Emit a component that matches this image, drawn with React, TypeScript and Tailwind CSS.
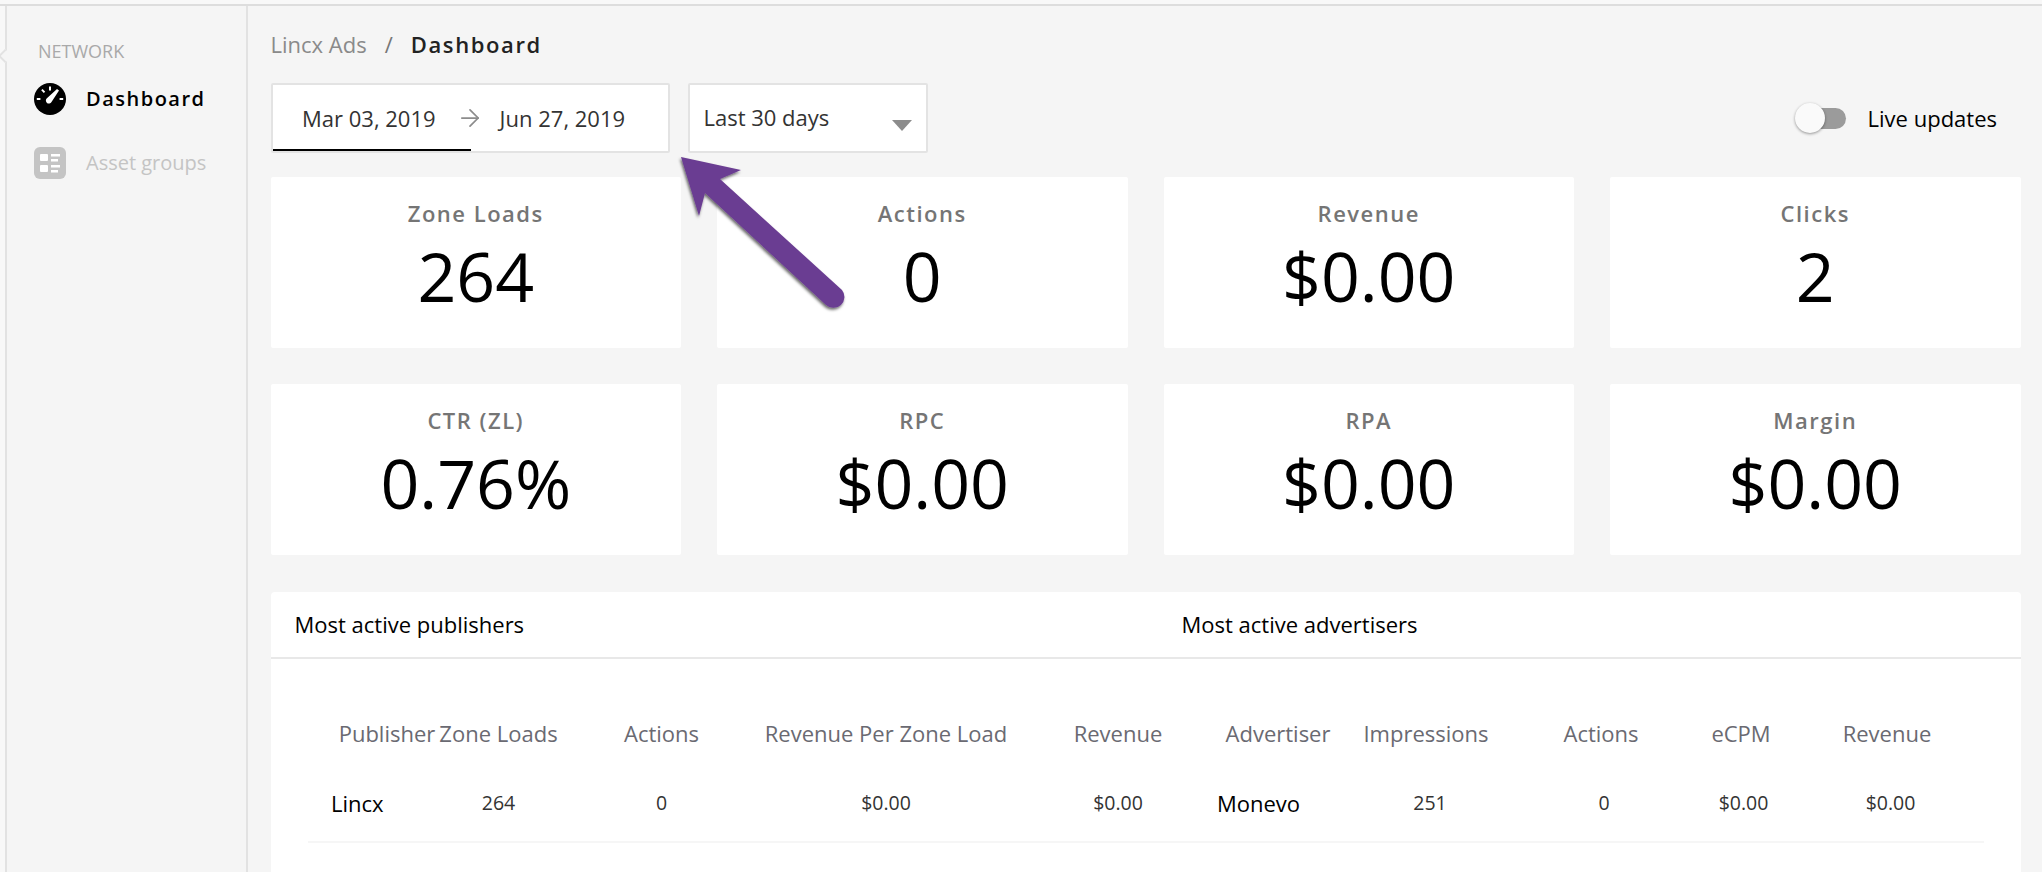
import { ArrowRight } from "lucide-react";

const font = { fontFamily: '"Open Sans", sans-serif' };

const stats = [
  { label: "Zone Loads", value: "264" },
  { label: "Actions", value: "0" },
  { label: "Revenue", value: "$0.00" },
  { label: "Clicks", value: "2" },
  { label: "CTR (ZL)", value: "0.76%" },
  { label: "RPC", value: "$0.00" },
  { label: "RPA", value: "$0.00" },
  { label: "Margin", value: "$0.00" },
];

function GaugeIcon() {
  return (
    <svg width="32" height="32" viewBox="0 0 32 32">
      <circle cx="16" cy="16" r="16" fill="#000" />
      <path d="M15 3.500h2v4h-2zM7.200 7.300l1.400-1.400 2.600 2.800-1.400 1.400zM2.800 15h3.600v2H2.800zM25.600 15h3.600v2h-3.600z" fill="#fff" />
      <path d="M23 6l2 1.500-7.500 11.500a3 3 0 1 1-4.600-3.700z" fill="#fff" />
    </svg>
  );
}

function AssetIcon() {
  return (
    <svg width="32" height="32" viewBox="0 0 32 32">
      <rect width="32" height="32" rx="6" fill="#c4c4c4" />
      <rect x="6" y="7" width="8" height="7" rx="1" fill="#fff" />
      <rect x="6" y="18" width="8" height="7" rx="1" fill="#fff" />
      <path d="M17 7h9v2.500h-9zM17 12h7v2.500h-7zM17 18h9v2.500h-9zM17 23h7v2.500h-7z" fill="#fff" />
    </svg>
  );
}

function StatCard({ label, value }: { label: string; value: string }) {
  return (
    <div className="h-[171px] rounded-[2px] bg-white text-center">
      <div className="pt-[22px] pb-[1px] text-[22px] leading-[29px] font-semibold tracking-[1.5px] text-[#757575]">{label}</div>
      <div className="text-[68px] leading-[93px] text-black">{value}</div>
    </div>
  );
}

export default function App() {
  return (
    <div className="relative h-[872px] w-[2042px] overflow-hidden bg-[#f8f8f8] pt-[4px]" style={font}>
      <div className="flex h-full border-t-2 border-[#dddddd]">
        <div className="relative ml-[5px] w-[243px] shrink-0 border-x-2 border-[#e2e2e2] bg-[#f5f5f5]">
          {/* little notch on the collapsed rail */}
          <div className="absolute top-[45px] -left-[7px] h-[10px] w-[10px] rotate-45 border-b-2 border-l-2 border-[#e2e2e2] bg-[#f5f5f5]" />
          <div className="pt-[33px] pl-[31px] text-[18px] leading-[24px] text-[#a9a9a9]">NETWORK</div>
          <div className="mt-[20px] flex h-[32px] items-center gap-[20px] pl-[27px]">
            <GaugeIcon />
            <span className="text-[20px] font-semibold tracking-[1.5px] text-black">Dashboard</span>
          </div>
          <div className="mt-[32px] flex h-[32px] items-center gap-[20px] pl-[27px]">
            <AssetIcon />
            <span className="text-[20px] text-[#c4c4c4]">Asset groups</span>
          </div>
        </div>

        <div className="min-w-0 flex-1 bg-[#f5f5f5] pr-[21.500px] pl-[22.500px]">
          <div className="flex h-[77px] items-start pt-[24px] text-[22px] leading-[29px]">
            <span className="text-[#8a8a8a]">Lincx Ads</span>
            <span className="mx-[18px] text-[#777]">/</span>
            <span className="font-semibold tracking-[1.6px] text-[#222]">Dashboard</span>
          </div>

          <div className="flex items-center">
            <div className="relative flex h-[70px] w-[399px] items-center rounded-[2px] border-2 border-[#e3e3e3] bg-white pl-[29.500px] text-[22px] text-[#333]">
              <span>Mar 03, 2019</span>
              <ArrowRight className="mr-[16px] ml-[20px] h-[28px] w-[28px] text-[#8c8c8c]" strokeWidth={1.5} />
              <span>Jun 27, 2019</span>
              <div className="absolute bottom-0 left-0 h-[2px] w-[198px] bg-black" />
            </div>
            <div className="relative ml-[18px] flex h-[70px] w-[240px] items-center rounded-[2px] border-2 border-[#e3e3e3] bg-white pb-[2px] pl-[14px] text-[22px] text-[#333]">
              <span>Last 30 days</span>
              <div className="absolute top-[35px] right-[14px] h-0 w-0 border-x-[10px] border-t-[11px] border-x-transparent border-t-[#8c8c8c]" />
            </div>
            <div className="ml-auto flex items-center pr-[23.500px]">
              <div className="relative h-[21px] w-[44px] rounded-full bg-[#9b9b9b]">
                <div className="absolute top-[-5px] -left-[7px] h-[30px] w-[30px] rounded-full bg-[#fafafa] shadow-[0_1px_3px_rgba(0,0,0,0.4)]" />
              </div>
              <span className="ml-[22px] text-[22px] text-black">Live updates</span>
            </div>
          </div>

          <div className="mt-[24px] grid grid-cols-4 gap-x-[36px] gap-y-[36px]">
            {stats.map((s) => (
              <StatCard key={s.label} label={s.label} value={s.value} />
            ))}
          </div>

          <div className="mt-[37px] h-[400px] rounded-[4px] bg-white">
            <div className="flex h-[67px] items-center border-b-2 border-[#e8e8e8] text-[22px] text-black">
              <span className="w-[911px] pl-[24px]">Most active publishers</span>
              <span>Most active advertisers</span>
            </div>
            <div className="mx-[37px] border-b-2 border-[#f6f6f6] pt-[45px] pl-[23.500px]">
              <div className="grid h-[58px] grid-cols-[106px_123px_203px_246px_208px_122px_182px_166px_113px_181px] items-center text-center text-[22px] text-[#6a6a72]">
                <span className="pl-[6px] whitespace-nowrap">Publisher</span>
                <span className="whitespace-nowrap">Zone Loads</span>
                <span>Actions</span>
                <span className="whitespace-nowrap">Revenue Per Zone Load</span>
                <span className="pl-[10px]">Revenue</span>
                <span>Advertiser</span>
                <span className="pr-[8px]">Impressions</span>
                <span className="pr-[6px]">Actions</span>
                <span className="pr-[5px]">eCPM</span>
                <span className="pr-[7px]">Revenue</span>
              </div>
              <div className="grid h-[79px] grid-cols-[106px_123px_203px_246px_208px_122px_182px_166px_113px_181px] items-center pt-[3px] text-center text-[19.500px] text-[#333]">
                <span className="text-left text-[22px] text-black">Lincx</span>
                <span>264</span>
                <span>0</span>
                <span>$0.00</span>
                <span className="pl-[10px]">$0.00</span>
                <span className="text-left text-[22px] text-black">Monevo</span>
                <span>251</span>
                <span>0</span>
                <span>$0.00</span>
                <span>$0.00</span>
              </div>
            </div>
          </div>
        </div>
      </div>

      {/* annotation arrow drawn on top of the screenshot */}
      <svg className="absolute top-0 left-0" width="2042" height="872" style={{ pointerEvents: "none" }}>
        <defs>
          <filter id="arrowShadow" x="-20%" y="-20%" width="150%" height="150%">
            <feDropShadow dx="-1" dy="2" stdDeviation="1.500" floodColor="#000" floodOpacity="0.6" />
          </filter>
        </defs>
        <path
          d="M681 157 L741 170 L720 179 L842 290 A11 11 0 0 1 826 305 L705 193 L699 216 Z"
          fill="#6b3d92"
          filter="url(#arrowShadow)"
        />
      </svg>
    </div>
  );
}
